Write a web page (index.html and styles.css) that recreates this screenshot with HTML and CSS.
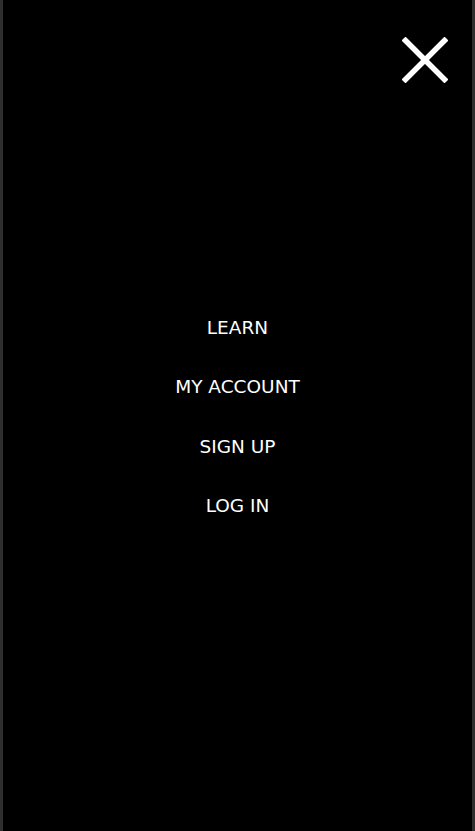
FILE: index.html
```html
<!DOCTYPE html>
<html lang="en">
<head>
    <meta charset="UTF-8">
    <title>Menu</title>
    <link rel="stylesheet" href="styles.css">
</head>
<body>
<div class="menu">
    <button class="menu__close" aria-label="Close menu">
        <svg width="46" height="46" viewBox="0 0 46 46">
            <path d="M3.5 3.5 L42.5 42.5 M42.5 3.5 L3.5 42.5" stroke="#fff" stroke-width="5.5" stroke-linecap="square" fill="none"/>
        </svg>
    </button>
    <ul class="menu__list">
        <li><a href="#">LEARN</a></li>
        <li><a href="#">MY ACCOUNT</a></li>
        <li><a href="#">SIGN UP</a></li>
        <li><a href="#">LOG IN</a></li>
    </ul>
</div>
</body>
</html>
```

FILE: styles.css
```css
html, body {
    margin: 0;
    height: 100%;
    background: #000;
}

.menu {
    position: relative;
    box-sizing: border-box;
    height: 100vh;
    background: #000;
    border-left: 3px solid #2e2e2e;
    border-right: 3px solid #2e2e2e;
    display: flex;
    align-items: center;
    justify-content: center;
}

.menu__close {
    position: absolute;
    top: 37px;
    right: 24px;
    padding: 0;
    border: none;
    background: none;
    width: 46px;
    height: 46px;
    cursor: pointer;
}

.menu__close svg {
    display: block;
}

.menu__list {
    list-style: none;
    margin: 0;
    padding: 3px 0 0;
    display: flex;
    flex-direction: column;
    align-items: center;
    gap: 37.3px;
}

.menu__list a {
    display: block;
    color: #fff;
    text-decoration: none;
    font-family: "DejaVu Sans", sans-serif;
    font-size: 18.5px;
    line-height: 22px;
}
```
